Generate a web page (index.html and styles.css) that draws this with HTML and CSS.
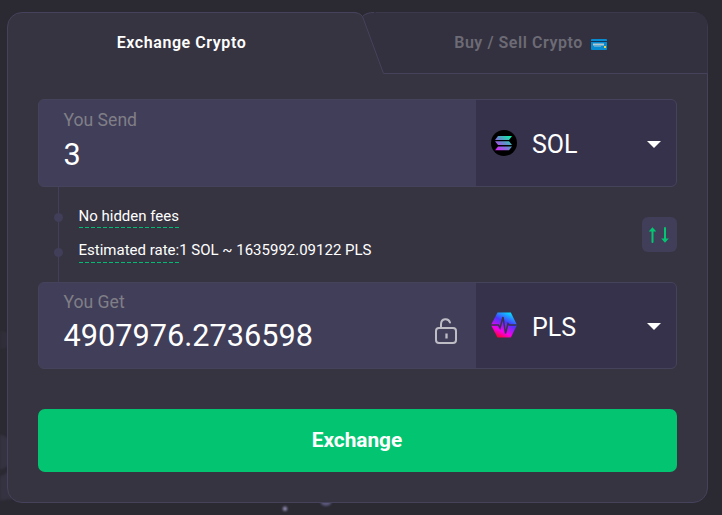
FILE: index.html
```html
<!DOCTYPE html>
<html lang="en">
<head>
<meta charset="utf-8">
<title>Exchange Crypto</title>
<link rel="stylesheet" href="styles.css">
</head>
<body>
<svg class="backdrop" width="722" height="515" viewBox="0 0 722 515" aria-hidden="true">
  <circle cx="-4" cy="452" r="18" fill="#353341"/>
  <path d="M-2 478 L12 470 V499 L-2 501Z" fill="#353341"/>
  <circle cx="2" cy="340" r="9" fill="#302f39"/>
  <circle cx="285" cy="508.700" r="2.200" fill="#8f8cb0"/>
  <circle cx="326" cy="500" r="6" fill="#5b587c"/>
</svg>
<main class="card">
  <nav class="tabs">
    <svg class="tab-shape" width="701" height="62" viewBox="0 0 701 62" aria-hidden="true">
      <path d="M349 0H369V.5Q360 .5 355.500 4.500Q353 .5 349 .5Z" fill="#2b2a33"/>
      <path d="M355.500 4.500Q358 .5 367 .5H686Q700.500 .5 700.500 15V61.500H376.500Z" fill="#33313f"/>
      <path d="M345 .5Q353 .5 355.500 4.500Q359 .5 367 .5M355.500 4.500L376.500 61.500H700.500" fill="none" stroke="#45425b"/>
    </svg>
    <a class="tab tab-active">Exchange Crypto</a>
    <a class="tab tab-muted">Buy / Sell Crypto
      <svg class="bank-card" width="16" height="11" viewBox="0 0 16 11"><rect width="16" height="11" rx="1" fill="#078bd0"/><path d="M0 2.500H16" stroke="#12355b"/><path d="M2 5.500H13" stroke="#b5c5cd" stroke-width="2"/><path d="M3 7.200H10" stroke="#6cb5d8"/><path d="M13 7h2v2h-2z" fill="#e5d447"/></svg>
    </a>
  </nav>
  <div class="content">
    <section class="field send">
      <div class="amount"><label>You Send</label><span class="value">3</span></div>
      <div class="currency">
        <svg width="26" height="26" viewBox="0 0 26 26">
          <defs><linearGradient id="sol" gradientUnits="userSpaceOnUse" x1="6" y1="21" x2="20" y2="5"><stop offset="0" stop-color="#dc1fff"/><stop offset=".5" stop-color="#658bc9"/><stop offset="1" stop-color="#00ffa3"/></linearGradient></defs>
          <circle cx="13" cy="13" r="13" fill="#000"/>
          <path d="M7 6H21L18 10H4ZM4 11.200H18L21 15H7ZM7 16.500H21L18 20.300H4Z" fill="url(#sol)"/>
        </svg>
        <span class="ticker">SOL</span><i class="caret"></i>
      </div>
    </section>
    <div class="details">
      <ul>
        <li><span class="hint">No hidden fees</span></li>
        <li><span class="hint">Estimated rate:</span><span>1 SOL ~ 1635992.09122 PLS</span></li>
      </ul>
      <button class="swap" aria-label="Swap currencies">
        <svg width="21" height="16" viewBox="0 0 21 16"><path d="M4.500 15V3M17 1V12" fill="none" stroke="#03c673" stroke-width="2" stroke-linecap="round"/><path d="M4.500 .3L8.300 4.600H.7ZM17 15.700L20.800 11.400H13.200Z" fill="#03c673"/></svg>
      </button>
    </div>
    <section class="field get">
      <div class="amount"><label>You Get</label><span class="value">4907976.2736598</span>
        <svg class="lock" width="24" height="28" viewBox="0 0 24 28" fill="none" stroke="#bebdc5" stroke-width="2"><rect x="2" y="11" width="20" height="15" rx="3"/><path d="M7 11V7.500C7 .8 14.500 .8 16 5.500" stroke-linecap="round"/><path d="M12.500 16.500V21.500" stroke-width="2.300"/></svg>
      </div>
      <div class="currency">
        <svg width="26" height="26" viewBox="0 0 26 26">
          <defs><linearGradient id="pls" x1=".25" y1="1" x2=".75" y2="0"><stop offset="0" stop-color="#ff0022"/><stop offset=".27" stop-color="#f500ec"/><stop offset=".62" stop-color="#4b36ff"/><stop offset="1" stop-color="#00e4ff"/></linearGradient></defs>
          <path d="M6.500 .5H19.800L26 13L19.800 25.500H6.500L0 13Z" fill="url(#pls)"/>
          <path d="M0 13H7.500L9 16L12 5L14.500 21.500L17 11.500L18.300 13H26" fill="none" stroke="#37324b" stroke-width="1.500"/>
        </svg>
        <span class="ticker">PLS</span><i class="caret"></i>
      </div>
    </section>
    <button class="submit">Exchange</button>
  </div>
</main>
</body>
</html>
```
FILE: styles.css
```css
* { box-sizing: border-box; }
body {
  margin: 0;
  height: 515px;
  padding: 12px 14px 12px 7px;
  overflow: hidden;
  background: #2b2a33;
  color: #fff;
  font-family: Roboto, "Liberation Sans", sans-serif;
}
.backdrop { position: absolute; left: 0; top: 0; filter: blur(1px); }
.card {
  position: relative;
  width: 701px;
  height: 491px;
  border: 1px solid #45425b;
  border-radius: 15px;
  background: #363441;
}
.tabs { display: flex; height: 61px; padding-bottom: 2px; }
.tab-shape { position: absolute; left: -1px; top: -1px; }
.tab {
  position: relative;
  display: flex;
  align-items: center;
  justify-content: center;
  font-size: 16px;
  font-weight: 600;
  letter-spacing: .57px;
}
.tab-active { width: 347px; }
.tab-muted { width: 352px; padding: 0 6px 0 5px; color: #6d6b75; letter-spacing: .55px; }
.bank-card { margin: 4px 0 0 8px; }
.content { padding: 26px 30px 0; margin-top: -1px; }
.field {
  display: flex;
  width: 639px;
  height: 88px;
  border: 1px solid #45435b;
  border-radius: 6px;
  background: #403e59;
}
.get { height: 87px; }
.amount {
  position: relative;
  width: 437px;
  padding: 8px 25px 8px 24.5px;
  display: flex;
  flex-direction: column;
}
label { font-size: 17.6px; line-height: 24px; color: #807f87; }
.value { font-size: 30.7px; line-height: 46px; }
.get label { line-height: 22px; }
.lock { position: absolute; right: 18px; top: 34px; }
.currency {
  flex: 1;
  display: flex;
  align-items: center;
  padding: 3px 15.5px 0 15px;
  border-radius: 0 5px 5px 0;
  background: #37324b;
}
.currency > svg { margin-top: -4px; }
.ticker { margin: 1px 0 0 15px; font-size: 25px; line-height: 30px; }
.caret {
  margin: -1px 0 0 auto;
  border: 7px solid transparent;
  border-top-color: #fff;
  border-bottom: 0;
}
.details {
  display: flex;
  align-items: center;
  justify-content: space-between;
  height: 95px;
}
ul {
  height: 95px;
  margin: 0 0 0 20px;
  padding: 19px 0 0 20px;
  border-left: 1px solid #413f59;
  list-style: none;
  font-size: 15px;
  line-height: 20px;
}
li { position: relative; left: -.5px; display: flex; height: 35px; }
li::before {
  content: "";
  position: absolute;
  left: -25px;
  top: 7px;
  width: 9px;
  height: 9px;
  border-radius: 50%;
  background: #403e59;
}
li + li { margin-top: -1px; }
li + li::before { top: 8px; }
.hint {
  height: 22px;
  background: repeating-linear-gradient(90deg, #03b973 0 4px, transparent 4px 6px) bottom / 100% 1px no-repeat;
}
li + li .hint { height: 23px; }
.swap {
  display: flex;
  align-items: center;
  justify-content: center;
  width: 35px;
  height: 35px;
  padding: 0 2px 0 0;
  border: 0;
  border-radius: 6px;
  background: #403e59;
}
.submit {
  width: 639px;
  height: 63px;
  margin-top: 40px;
  padding: 0 1px 2px 0;
  border: 0;
  border-radius: 7px;
  background: #03c571;
  color: #fff;
  font: bold 20.8px Roboto, "Liberation Sans", sans-serif;
}
```
